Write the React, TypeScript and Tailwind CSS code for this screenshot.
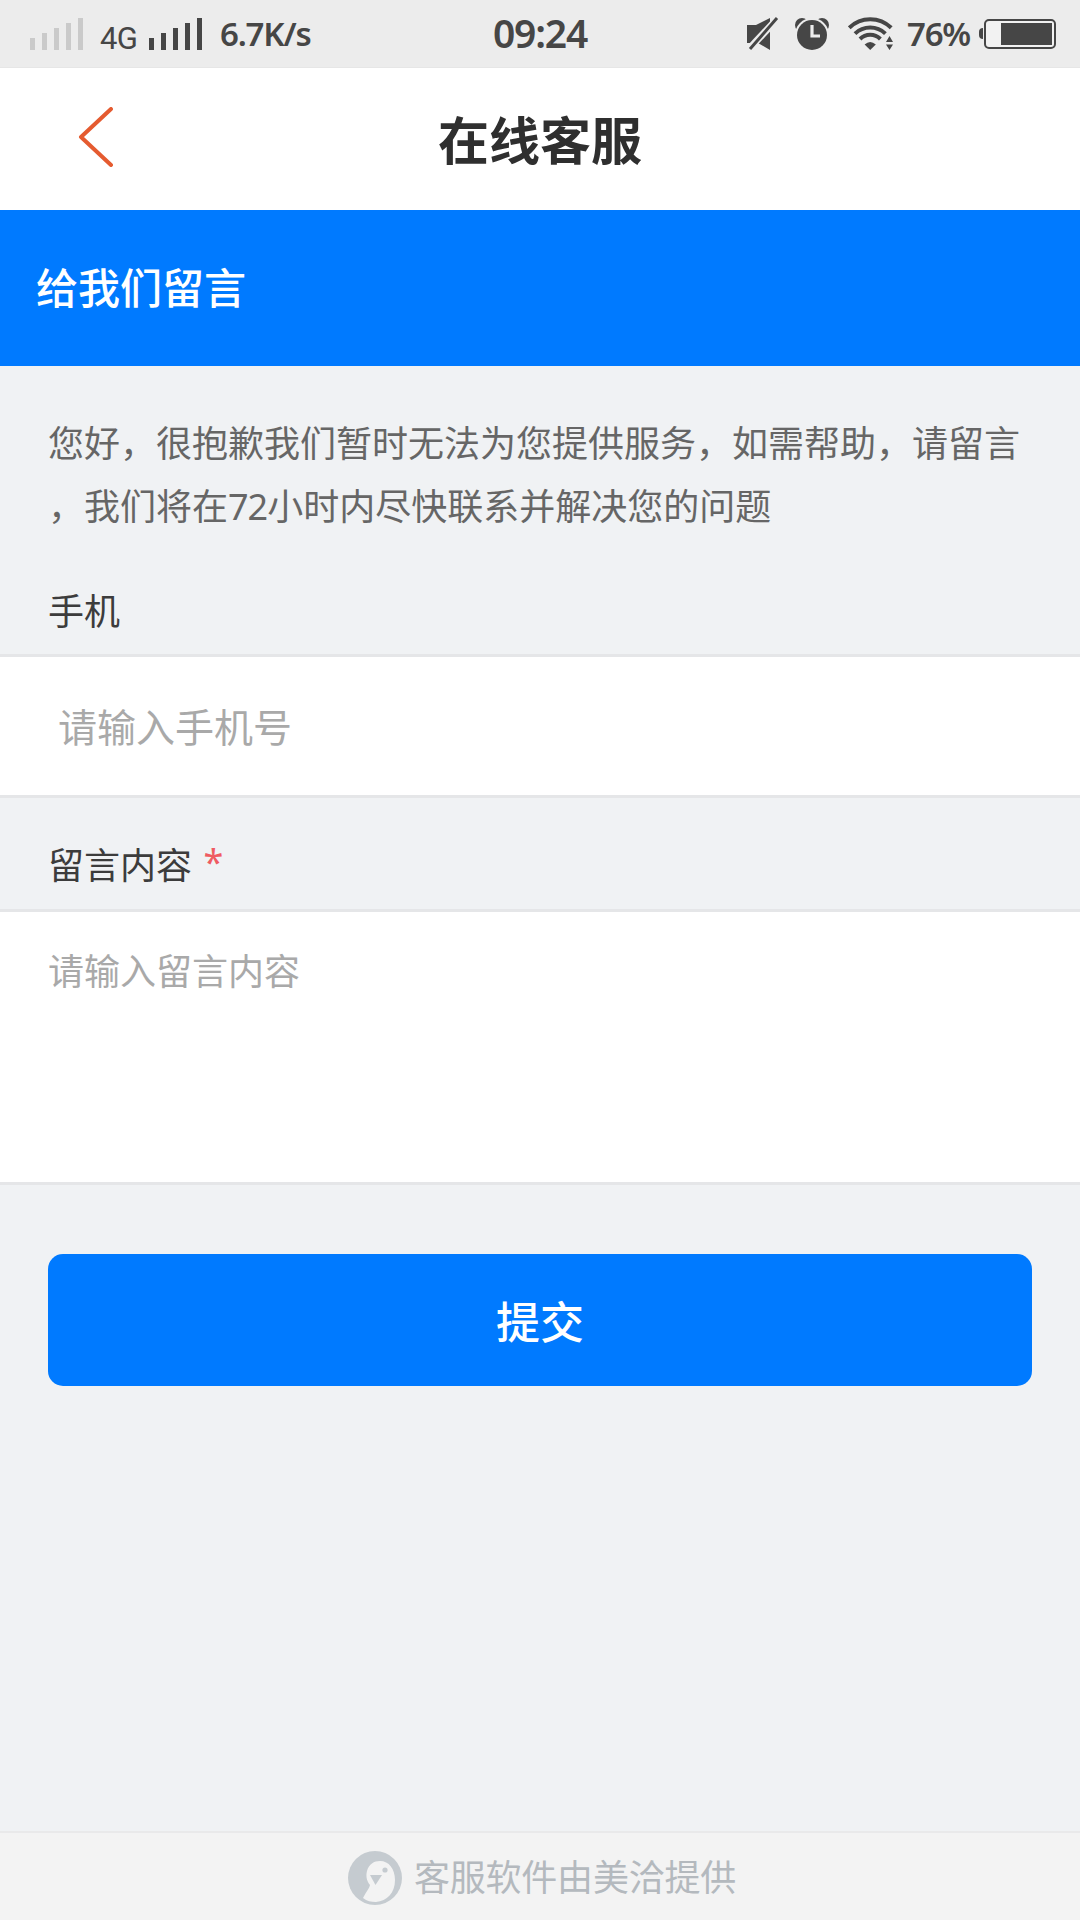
import React from 'react';

// Five ascending bars, shared by both SIM slots
const SignalBars: React.FC<{ className: string }> = ({ className }) => (
  <svg className={className} width="53" height="32" viewBox="0 0 53 32" fill="currentColor">
    <rect x="0" y="20" width="5" height="12" />
    <rect x="12" y="15" width="5" height="17" />
    <rect x="24" y="10" width="5" height="22" />
    <rect x="36" y="5" width="5" height="27" />
    <rect x="48" y="0" width="5" height="32" />
  </svg>
);

const MuteIcon = () => (
  <svg width="32" height="34" viewBox="0 0 32 34" fill="currentColor">
    <path d="M0 8H9L23 1V33L11 26H0Z" />
    <path d="M1 33L31 1" stroke="#ececec" strokeWidth="7" />
    <path d="M3 32L30 1" stroke="currentColor" strokeWidth="3" />
  </svg>
);

const AlarmIcon = () => (
  <svg width="34" height="34" viewBox="0 0 34 34" fill="currentColor">
    <circle cx="7" cy="8" r="7" />
    <circle cx="27" cy="8" r="7" />
    <circle cx="17" cy="18" r="17" fill="#ececec" />
    <circle cx="17" cy="18" r="15" />
    <path d="M17 8V19H25" fill="none" stroke="#ececec" strokeWidth="3.2" />
  </svg>
);

const WifiIcon = () => (
  <svg width="46" height="34" viewBox="0 0 46 34" fill="none" stroke="currentColor" strokeWidth="4">
    <path d="M1.2 10.8A30 30 0 0 1 43.2 10.8" />
    <path d="M7 16.6A22 22 0 0 1 37.4 16.6" />
    <path d="M12 22A14.5 14.5 0 0 1 32.4 22" />
    <path d="M16.6 27.6Q22.2 22.4 27.8 27.6L22.2 33Z" fill="currentColor" stroke="none" />
    <path d="M38 25L41.5 19L45 25ZM38 27.5H45L41.5 33Z" fill="currentColor" stroke="none" />
  </svg>
);

const BatteryIcon = () => (
  <svg width="77" height="30" viewBox="0 0 77 30" fill="currentColor">
    <path d="M4 9Q0 9 0 13V16Q0 20 4 20Z" />
    <rect x="6" y="1" width="70" height="28" rx="4" fill="#f2f2f2" stroke="currentColor" strokeWidth="2" />
    <rect x="22" y="4" width="51" height="22" />
  </svg>
);

const StatusBar = () => (
  <header className="flex h-[68px] items-start border-b border-[#e6e6e6] bg-[#ececec] font-['Noto_Sans','Open_Sans',sans-serif] font-semibold text-[#464646]">
    <div className="flex w-[464px] items-start pl-[30px]">
      <SignalBars className="mt-[18px] text-[#cacaca]" />
      <span className="ml-[17px] mt-[19px] w-[38px] font-['Roboto',sans-serif] text-[31px] leading-10 font-normal tracking-[-0.6px]">4G</span>
      <SignalBars className="ml-[11px] mt-[18px]" />
      <span className="ml-[18px] mt-[14px] text-[33px] leading-10 tracking-[-1.2px]">6.7K/s</span>
    </div>
    <span className="mt-[9px] w-[152px] text-center text-[39px] leading-12 tracking-[-1.2px]">09:24</span>
    <div className="flex flex-1 items-start pl-[131px]">
      <div className="mt-[17px]">
        <MuteIcon />
      </div>
      <div className="ml-[16px] mt-[17px]">
        <AlarmIcon />
      </div>
      <div className="ml-[19px] mt-[17px]">
        <WifiIcon />
      </div>
      <span className="ml-[13px] mt-[14px] w-[65px] text-[33px] leading-10 tracking-[-1.2px]">76%</span>
      <div className="ml-[7px] mt-[19px]">
        <BatteryIcon />
      </div>
    </div>
  </header>
);

const NavBar = () => (
  <nav className="grid h-[142px] grid-cols-[1fr_auto_1fr] items-center bg-white pt-[2px]">
    <button type="button" aria-label="返回" className="ml-[78px] w-9 pb-[6px]">
      <svg width="36" height="60" viewBox="0 0 36 60" fill="none" stroke="#e55b30" strokeWidth="4" strokeLinecap="round" strokeLinejoin="round">
        <path d="M33 2L3 30L33 58" />
      </svg>
    </button>
    <h1 className="text-[51px] leading-[60px] font-bold text-[#2f2f2f]">在线客服</h1>
  </nav>
);

const BirdLogo = () => (
  <svg width="54" height="54" viewBox="0 0 54 54">
    <circle cx="27" cy="27" r="27" fill="#c5cbd0" />
    <path d="M15 47C18 41 21 38 22 34C18 29 18 24 19 20C21 13 26 10 32 10C41 10 47 18 47 29C47 42 39 50 28 51C23 51 19 50 15 47Z" fill="#f3f3f3" />
    <path d="M22 24H34L27.5 34Z" fill="#c5cbd0" />
    <circle cx="37" cy="19" r="2.6" fill="#c5cbd0" />
  </svg>
);

const App: React.FC = () => {
  return (
    <div className="flex h-[1920px] w-[1080px] flex-col bg-[#f0f2f4] font-['Noto_Sans','Noto_Sans_CJK_SC',sans-serif] text-[36px]">
      <StatusBar />
      <NavBar />

      <div className="flex h-[156px] items-center bg-[#007aff] pl-[36px]">
        <h2 className="text-[42px] leading-[60px] font-medium text-white">给我们留言</h2>
      </div>

      {/* Message form */}
      <form className="flex flex-col">
        <p className="mt-[46px] pl-[48px] leading-[63px] whitespace-nowrap text-[#666666]">
          您好，很抱歉我们暂时无法为您提供服务，如需帮助，请留言
          <br />
          ，我们将在<span className="tracking-[-1px]">72</span>小时内尽快联系并解决您的问题
        </p>

        <label htmlFor="phone" className="mt-[46px] h-[70px] pt-[3px] pl-[48px] leading-[50px] text-[#3c3c3c]">
          手机
        </label>
        <input
          id="phone"
          type="tel"
          placeholder="请输入手机号"
          className="h-[144px] border-y-[3px] border-[#e5e6e8] bg-white pl-[58px] text-[39px] placeholder:text-[#a9a9a9]"
        />

        <label htmlFor="content" className="h-[111px] pt-[43px] pl-[48px] leading-[50px] text-[#3c3c3c]">
          留言内容 <span className="ml-[2px] inline-block -translate-y-1 text-[#ef5b62]">*</span>
        </label>
        <textarea
          id="content"
          placeholder="请输入留言内容"
          className="h-[276px] resize-none border-y-[3px] border-[#e5e6e8] bg-white pt-[35px] pl-[48px] leading-[50px] placeholder:text-[#a9a9a9]"
        />

        <button type="button" className="mx-[48px] mt-[69px] h-[132px] rounded-[15px] bg-[#007aff] pt-[3px] text-[44px] font-medium text-white">
          提交
        </button>
      </form>

      <footer className="mt-auto flex h-[89px] items-center justify-center gap-[12px] border-t-2 border-[#e9e9ea] bg-[#f3f3f3] pt-[2px] pl-[4px] text-[#b4b9be]">
        <BirdLogo />
        <span className="leading-[50px] tracking-[-0.2px]">客服软件由美洽提供</span>
      </footer>
    </div>
  );
};

export default App;
